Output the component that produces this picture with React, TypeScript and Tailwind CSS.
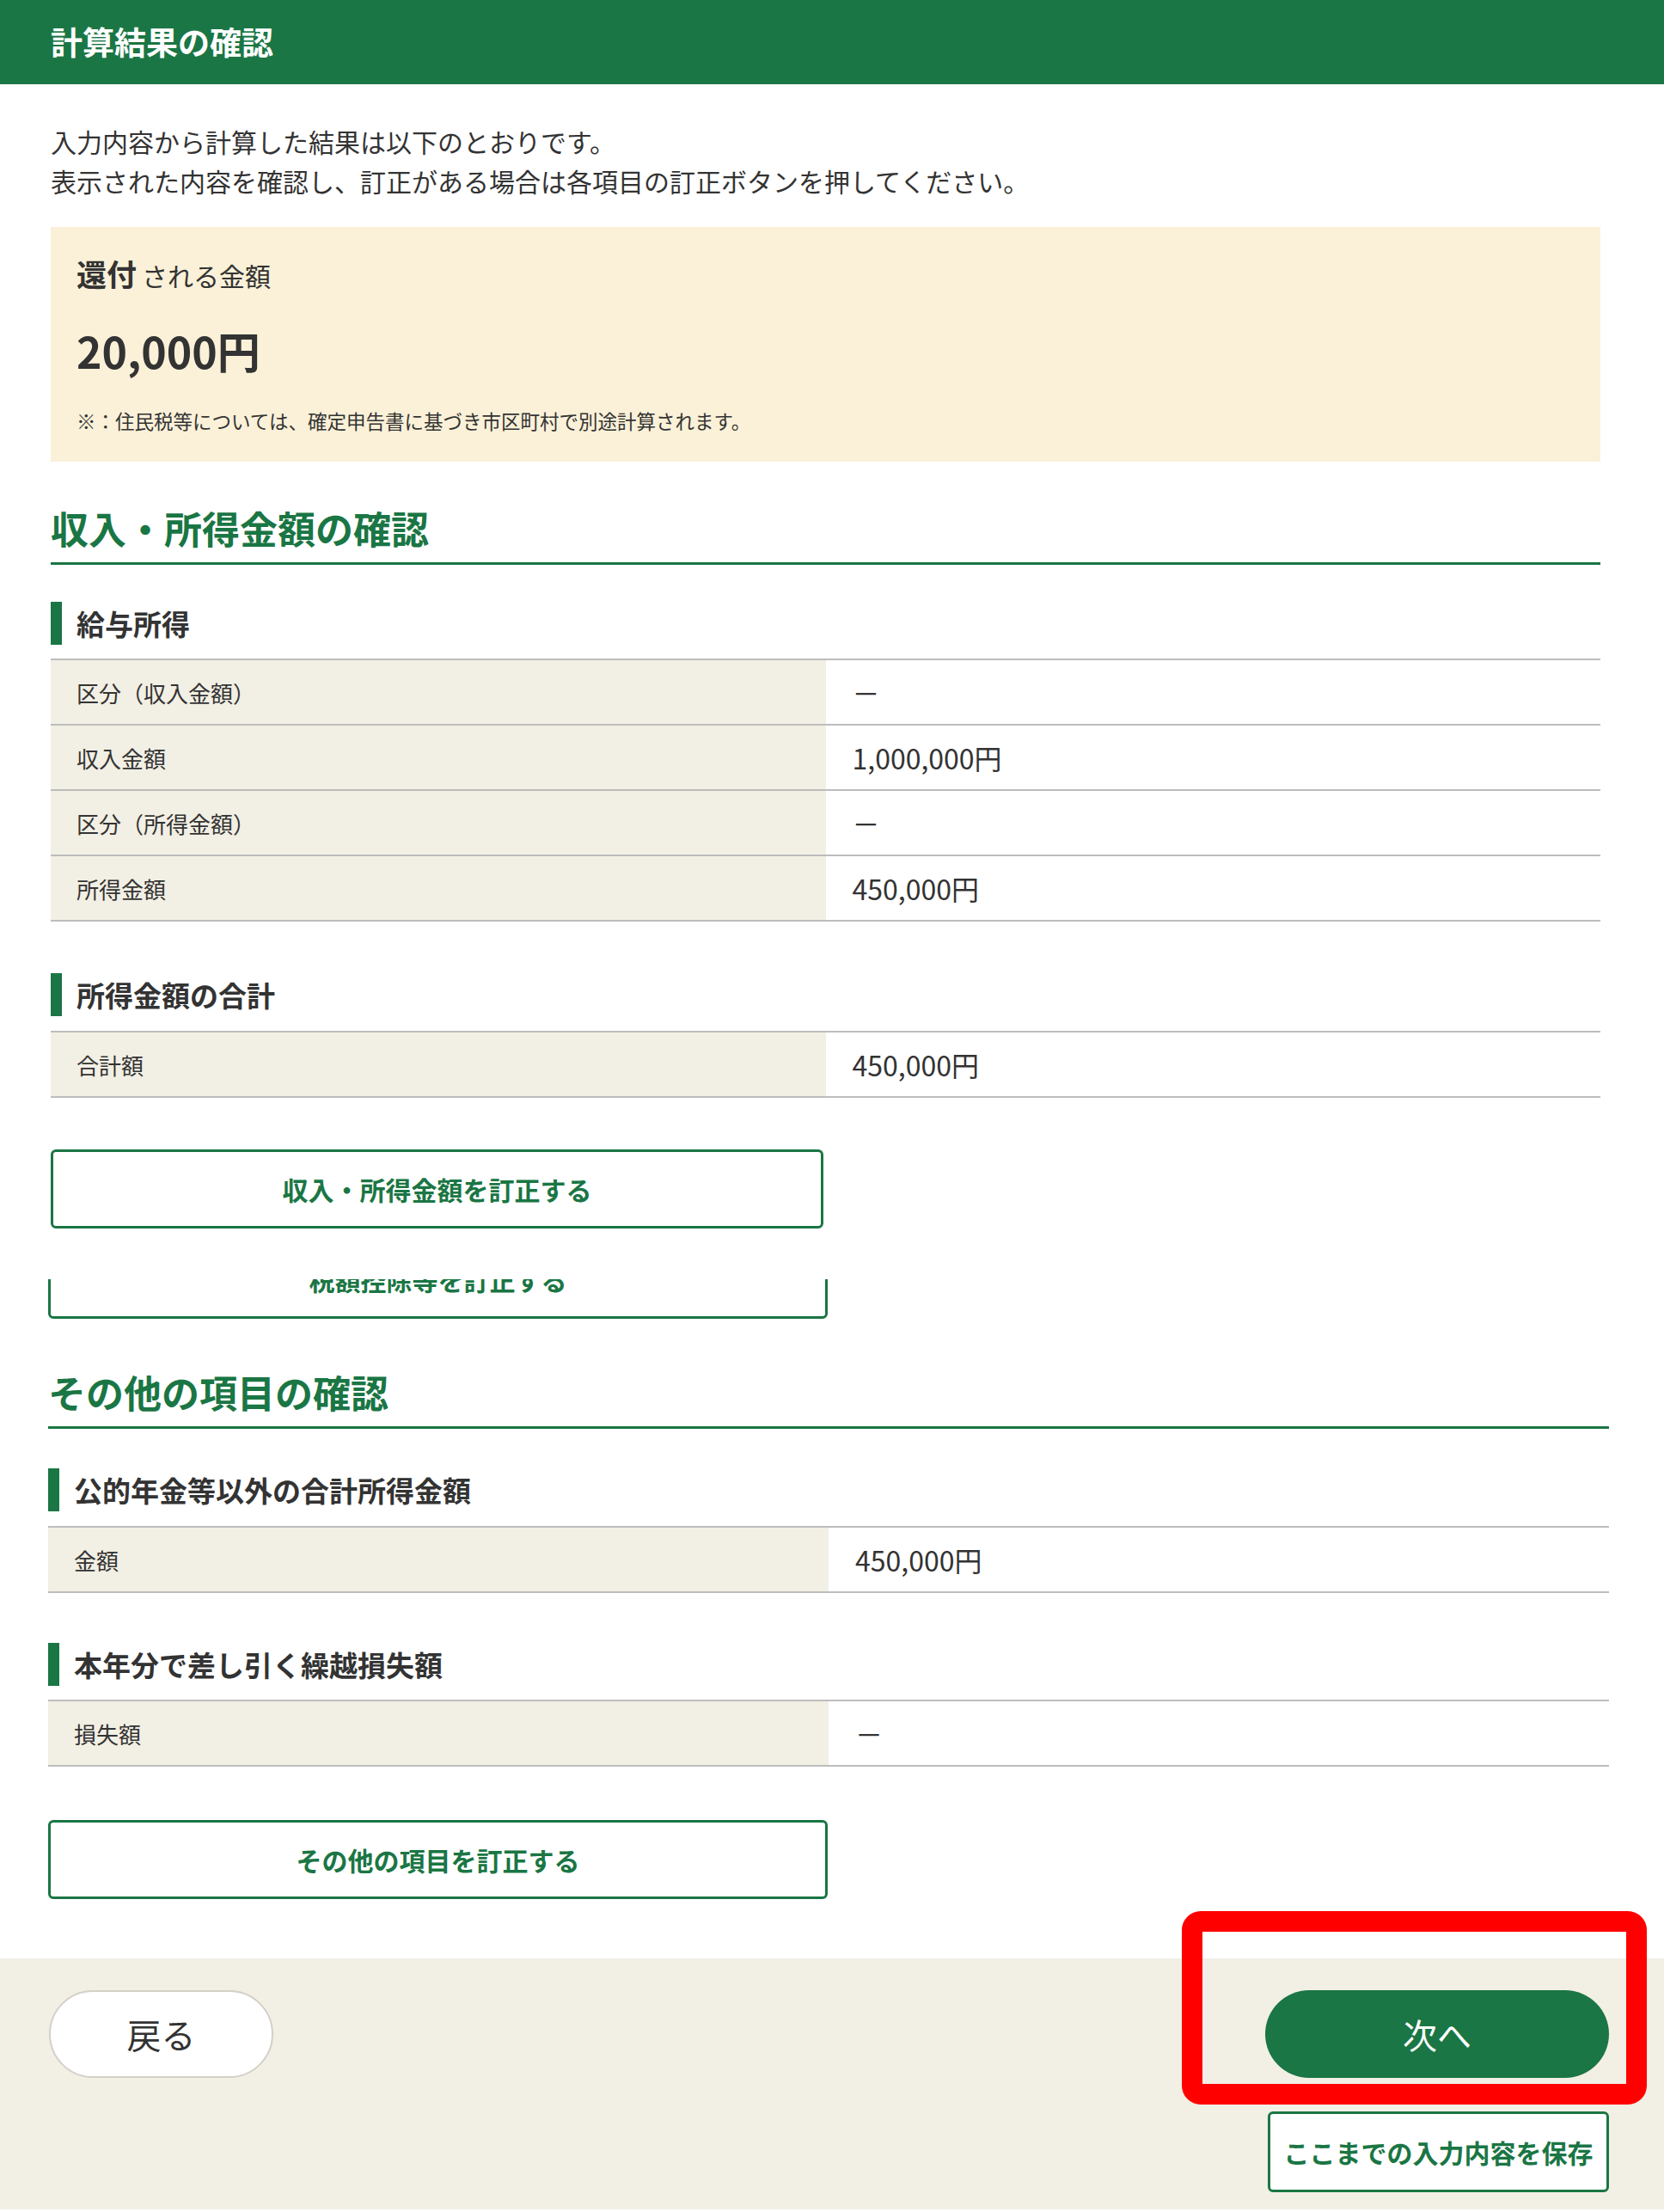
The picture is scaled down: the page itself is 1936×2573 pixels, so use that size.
import React from 'react'

const font = { fontFamily: '"Noto Sans CJK JP", "Noto Sans", sans-serif' }

type Row = { label: string; value: string }

function SubHeading({ children, className = '' }: { children: React.ReactNode; className?: string }) {
  return (
    <div className={`flex items-center gap-[17px] ${className}`}>
      <div className="h-[50px] w-[13px] bg-[#1a7644]" />
      <h3 className="text-[33px] font-bold leading-[50px] text-[#333]">{children}</h3>
    </div>
  )
}

function DataTable({ rows, className = '' }: { rows: Row[]; className?: string }) {
  return (
    <div className={`border-t-2 border-[#bdbdbd] ${className}`}>
      {rows.map((r) => (
        <div key={r.label} className="grid h-[76px] grid-cols-2 border-b-2 border-[#bdbdbd]">
          <div className="flex items-center bg-[#f2efe4] pl-[30px] text-[26px] text-[#333]">{r.label}</div>
          <div className="flex items-center pl-[31px] text-[32px] text-[#333]">{r.value}</div>
        </div>
      ))}
    </div>
  )
}

function SectionHeading({ children, className = '' }: { children: React.ReactNode; className?: string }) {
  return (
    <h2
      className={`border-b-[3px] border-[#1a7644] pb-[12px] text-[44px] font-bold leading-[56px] text-[#1a7644] ${className}`}
    >
      {children}
    </h2>
  )
}

function FixButton({ children, className = '' }: { children: React.ReactNode; className?: string }) {
  return (
    <button
      type="button"
      className={`flex h-[92px] items-center justify-center rounded-[6px] border-[3px] border-[#1a7644] bg-white text-[30px] font-bold text-[#1a7644] ${className}`}
    >
      {children}
    </button>
  )
}

export default function App() {
  return (
    <div className="relative min-h-[2573px] w-[1936px] bg-white" style={font}>
      {/* Title bar */}
      <header className="flex h-[98px] items-center bg-[#1a7644] pl-[59px]">
        <h1 className="text-[37px] font-bold text-white">計算結果の確認</h1>
      </header>

      {/* Part 1 */}
      <div className="ml-[59px] w-[1803px]">
        <div className="mt-[43px] text-[30px] leading-[46px] text-[#333]">
          <p>入力内容から計算した結果は以下のとおりです。</p>
          <p>表示された内容を確認し、訂正がある場合は各項目の訂正ボタンを押してください。</p>
        </div>

        <div className="mt-[31px] h-[273px] bg-[#faf1d8] px-[30px] pt-[31px] text-[#333]">
          <p className="h-[46px] leading-[46px]">
            <span className="text-[35px] font-bold">還付</span>
            <span className="ml-[6px] text-[30px]">される金額</span>
          </p>
          <p className="mt-[36px] h-[60px] text-[50px] font-bold leading-[60px]">20,000円</p>
          <p className="mt-[35px] text-[22.5px] leading-[34px]">※：住民税等については、確定申告書に基づき市区町村で別途計算されます。</p>
        </div>

        <SectionHeading className="mt-[49px]">収入・所得金額の確認</SectionHeading>

        <SubHeading className="mt-[43px]">給与所得</SubHeading>
        <DataTable
          className="mt-[16px]"
          rows={[
            { label: '区分（収入金額）', value: '－' },
            { label: '収入金額', value: '1,000,000円' },
            { label: '区分（所得金額）', value: '－' },
            { label: '所得金額', value: '450,000円' },
          ]}
        />

        <SubHeading className="mt-[60px]">所得金額の合計</SubHeading>
        <DataTable className="mt-[17px]" rows={[{ label: '合計額', value: '450,000円' }]} />

        <FixButton className="mt-[60px] w-[899px]">収入・所得金額を訂正する</FixButton>
      </div>

      {/* Part 2 (second capture, slightly wider) */}
      <div className="ml-[56px] w-[1816px]">
        {/* only the lower half of this button is visible in the capture */}
        <div className="mt-[59px] h-[46px] w-[907px] overflow-hidden">
          <FixButton className="-mt-[46px] w-[907px]">税額控除等を訂正する</FixButton>
        </div>

        <SectionHeading className="mt-[57px]">その他の項目の確認</SectionHeading>

        <SubHeading className="mt-[46px]">公的年金等以外の合計所得金額</SubHeading>
        <DataTable className="mt-[17px]" rows={[{ label: '金額', value: '450,000円' }]} />

        <SubHeading className="mt-[58px]">本年分で差し引く繰越損失額</SubHeading>
        <DataTable className="mt-[16px]" rows={[{ label: '損失額', value: '－' }]} />

        <FixButton className="mt-[62px] w-[907px]">その他の項目を訂正する</FixButton>
      </div>

      {/* Footer actions */}
      <footer className="mt-[69px] h-[292px] bg-[#f2efe5] pl-[57px] pr-[64px] pt-[37px]">
        <div className="flex items-start justify-between">
          <button
            type="button"
            className="flex h-[102px] w-[261px] items-center justify-center rounded-full border-2 border-[#d4d0c8] bg-white text-[40px] text-[#333]"
          >
            戻る
          </button>
          <div className="flex flex-col items-end">
            <button
              type="button"
              className="flex h-[102px] w-[400px] items-center justify-center rounded-full bg-[#1a7644] text-[40px] text-white"
            >
              次へ
            </button>
            <button
              type="button"
              className="mt-[39px] flex h-[94px] w-[397px] items-center justify-center rounded-[6px] border-[3px] border-[#1a7644] bg-white text-[30px] font-bold text-[#1a7644]"
            >
              ここまでの入力内容を保存
            </button>
          </div>
        </div>
      </footer>

      {/* Red highlight annotation */}
      <div className="pointer-events-none absolute left-[1375px] top-[2223px] h-[225px] w-[541px] rounded-[22px] border-[24px] border-[#ff0000]" />
    </div>
  )
}
